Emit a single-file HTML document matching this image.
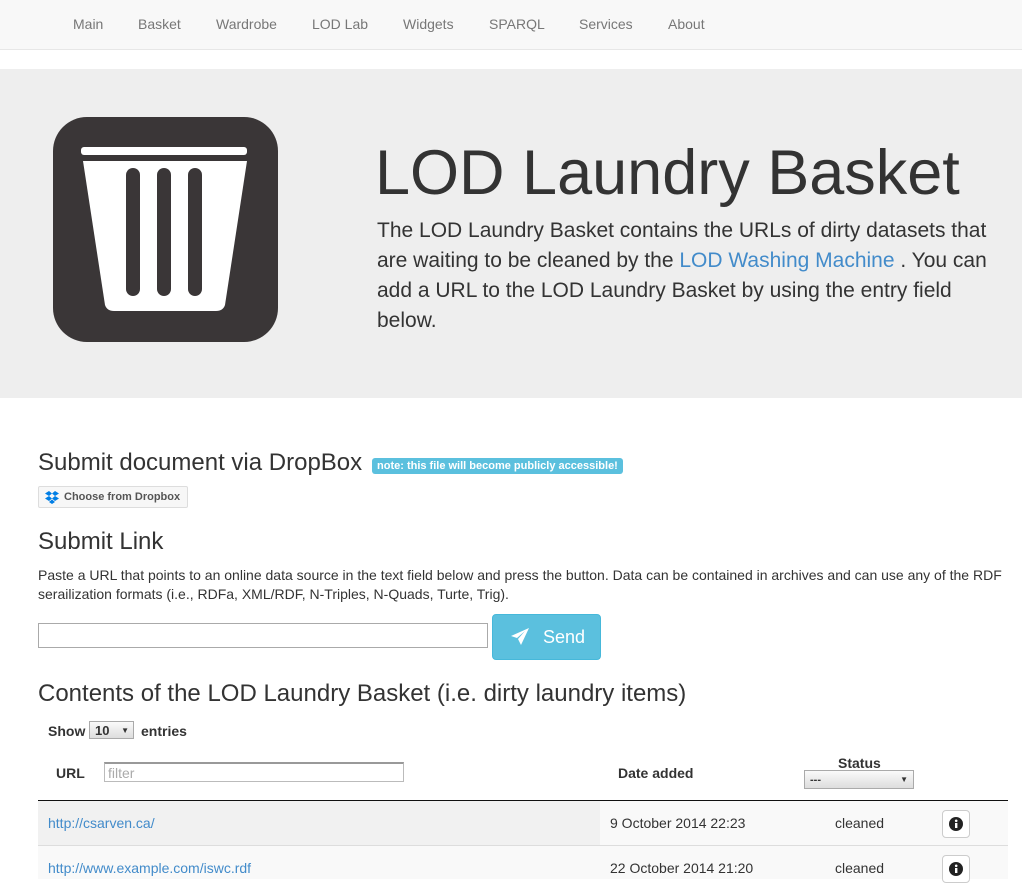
<!DOCTYPE html>
<html><head><meta charset="utf-8"><style>
body{margin:0;font-family:"Liberation Sans",sans-serif;color:#333;font-size:14px;background:#fff;width:1022px;height:879px;overflow:hidden;position:relative}
.nav{position:absolute;left:0;top:0;width:1022px;height:49px;background:#f8f8f8;border-bottom:1px solid #e7e7e7}
.nav span{position:absolute;top:16px;color:#777;font-size:14px}
.jumbo{position:absolute;left:0;top:69px;width:1022px;height:329px;background:#eee}
.abs{position:absolute}
a{color:#428bca;text-decoration:none}
h2{margin:0;font-weight:normal;font-size:24px;position:absolute;color:#333}
</style></head><body>
<div class="nav">
<span style="left:73px">Main</span><span style="left:138px">Basket</span><span style="left:216px">Wardrobe</span><span style="left:312px">LOD Lab</span><span style="left:403px">Widgets</span><span style="left:489px">SPARQL</span><span style="left:579px">Services</span><span style="left:668px">About</span>
</div>
<div class="jumbo">
<svg class="abs" style="left:53px;top:48px" width="225" height="225" viewBox="0 0 225 225">
<rect width="225" height="225" rx="34" fill="#3a3637"/>
<rect x="28" y="30" width="166" height="8" rx="3" fill="#fff"/>
<path d="M30 44 H194 L172 188 Q170 194 163 194 H61 Q54 194 52 188 Z" fill="#fff"/>
<rect x="73" y="51" width="14" height="128" rx="7" fill="#3a3637"/>
<rect x="104" y="51" width="14" height="128" rx="7" fill="#3a3637"/>
<rect x="135" y="51" width="14" height="128" rx="7" fill="#3a3637"/>
</svg>
<div class="abs" style="left:375px;top:68px;font-size:63px;color:#333">LOD Laundry Basket</div>
<div class="abs" style="left:377px;top:147px;width:620px;font-size:21px;line-height:30px;color:#333">The LOD Laundry Basket contains the URLs of dirty datasets that are waiting to be cleaned by the <a>LOD Washing Machine</a> . You can add a URL to the LOD Laundry Basket by using the entry field below.</div>
</div>
<h2 style="left:38px;top:449px">Submit document via DropBox</h2>
<div class="abs" style="left:372px;top:458px;background:#5bc0de;color:#fff;font-size:11px;font-weight:bold;padding:2px 5px;border-radius:3px">note: this file will become publicly accessible!</div>
<div class="abs" style="left:38px;top:486px;width:148px;height:20px;border:1px solid #ddd;border-radius:2px;background:#f7f7f7;font-size:11px;font-weight:bold;color:#555;line-height:20px">
<svg class="abs" style="left:6px;top:4px" width="14" height="13" viewBox="0 0 14 13"><path d="M4 0L0 2.5 4 5 7 2.5ZM10 0L7 2.5 10 5 14 2.5ZM0 7.5L4 10 7 7.5 4 5ZM14 7.5L10 5 7 7.5 10 10ZM4 11L7 13 10 11 7 8.5Z" fill="#007ee5"/></svg>
<span style="position:absolute;left:25px">Choose from Dropbox</span></div>
<h2 style="left:38px;top:528px">Submit Link</h2>
<div class="abs" style="left:38px;top:566px;width:975px;line-height:19px;font-size:14px">Paste a URL that points to an online data source in the text field below and press the button. Data can be contained in archives and can use any of the RDF serailization formats (i.e., RDFa, XML/RDF, N-Triples, N-Quads, Turte, Trig).</div>
<div class="abs" style="left:38px;top:623px;width:448px;height:23px;border:1px solid #aaa"></div>
<div class="abs" style="left:492px;top:614px;width:107px;height:44px;background:#5bc0de;border:1px solid #46b8da;border-radius:4px;color:#fff;font-size:18px">
<svg class="abs" style="left:18px;top:13px" width="18" height="17" viewBox="0 0 18 17"><path d="M18 0L0 8 6 10 14 3 7 11 10 17Z" fill="#fff"/></svg>
<span style="position:absolute;left:50px;top:12px">Send</span></div>
<h2 style="left:38px;top:680px">Contents of the LOD Laundry Basket (i.e. dirty laundry items)</h2>
<div class="abs" style="left:48px;top:723px;font-weight:bold">Show</div>
<div class="abs" style="left:89px;top:721px;width:45px;height:18px;border:1px solid #aaa;background:linear-gradient(#fafafa,#ddd);font-weight:bold;font-size:13px;line-height:18px;padding-left:5px;box-sizing:border-box">10<span style="position:absolute;right:4px;font-size:8px">▼</span></div>
<div class="abs" style="left:141px;top:723px;font-weight:bold">entries</div>
<div class="abs" style="left:56px;top:765px;font-weight:bold">URL</div>
<div class="abs" style="left:104px;top:762px;width:300px;height:20px;border:1px solid #bbb;border-top:2px solid #999;box-sizing:border-box;color:#aaa;font-size:14px;line-height:18px;padding-left:3px">filter</div>
<div class="abs" style="left:618px;top:765px;font-weight:bold">Date added</div>
<div class="abs" style="left:838px;top:755px;font-weight:bold">Status</div>
<div class="abs" style="left:804px;top:770px;width:110px;height:19px;border:1px solid #aaa;background:linear-gradient(#fafafa,#ddd);font-size:11px;font-weight:bold;line-height:18px;padding-left:5px;box-sizing:border-box">---<span style="position:absolute;right:5px;font-size:8px">▼</span></div>
<div class="abs" style="left:38px;top:800px;width:970px;height:1px;background:#111"></div>
<div class="abs" style="left:38px;top:801px;width:970px;height:44px;background:#f9f9f9;border-bottom:1px solid #ddd"></div>
<div class="abs" style="left:38px;top:801px;width:562px;height:44px;background:#f1f1f1"></div>
<div class="abs" style="left:38px;top:846px;width:970px;height:33px;background:#f9f9f9"></div>
<a class="abs" style="left:48px;top:815px">http://csarven.ca/</a>
<div class="abs" style="left:610px;top:815px">9 October 2014 22:23</div>
<div class="abs" style="left:835px;top:815px">cleaned</div>
<a class="abs" style="left:48px;top:860px">http://www.example.com/iswc.rdf</a>
<div class="abs" style="left:610px;top:860px">22 October 2014 21:20</div>
<div class="abs" style="left:835px;top:860px">cleaned</div>
<div class="abs" style="left:942px;top:810px;width:26px;height:26px;border:1px solid #ccc;border-radius:4px;background:#fff"><svg class="abs" style="left:6px;top:6px" width="14" height="14"><circle cx="7" cy="7" r="7" fill="#222"/><rect x="6" y="6" width="2.4" height="5" fill="#fff"/><circle cx="7.2" cy="3.8" r="1.3" fill="#fff"/></svg></div>
<div class="abs" style="left:942px;top:855px;width:26px;height:26px;border:1px solid #ccc;border-radius:4px;background:#fff"><svg class="abs" style="left:6px;top:6px" width="14" height="14"><circle cx="7" cy="7" r="7" fill="#222"/><rect x="6" y="6" width="2.4" height="5" fill="#fff"/><circle cx="7.2" cy="3.8" r="1.3" fill="#fff"/></svg></div>
</body></html>
